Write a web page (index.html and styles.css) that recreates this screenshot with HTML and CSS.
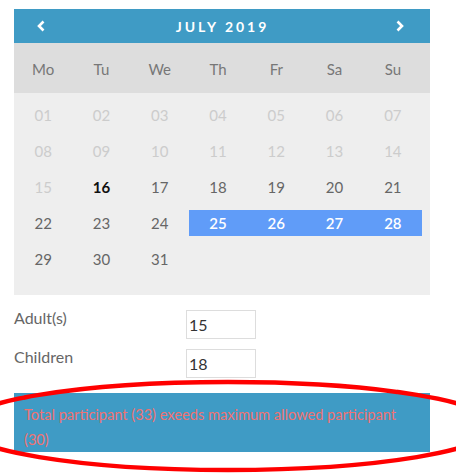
FILE: index.html
```html
<!DOCTYPE html>
<html lang="en">
<head>
  <meta charset="UTF-8">
  <title>Booking</title>
  <link rel="stylesheet" href="styles.css">
</head>
<body>
  <!-- Date picker -->
  <div class="calendar">
    <div class="cal-head">
      <svg class="nav" width="8" height="12" viewBox="0 0 8 12"><polyline points="6.5,1.5 2,6 6.5,10.5"/></svg>
      <span class="month">JULY 2019</span>
      <svg class="nav" width="8" height="12" viewBox="0 0 8 12"><polyline points="1.5,1.5 6,6 1.5,10.5"/></svg>
    </div>
    <div class="weekdays">
      <span>Mo</span><span>Tu</span><span>We</span><span>Th</span><span>Fr</span><span>Sa</span><span>Su</span>
    </div>
    <div class="days">
      <span class="off">01</span><span class="off">02</span><span class="off">03</span><span class="off">04</span><span class="off">05</span><span class="off">06</span><span class="off">07</span>
      <span class="off">08</span><span class="off">09</span><span class="off">10</span><span class="off">11</span><span class="off">12</span><span class="off">13</span><span class="off">14</span>
      <span class="off">15</span><span class="today">16</span><span>17</span><span>18</span><span>19</span><span>20</span><span>21</span>
      <span>22</span><span>23</span><span>24</span><span class="sel">25</span><span class="sel">26</span><span class="sel">27</span><span class="sel">28</span>
      <span>29</span><span>30</span><span>31</span>
    </div>
  </div>

  <!-- Participants -->
  <div class="fields">
    <div class="field">
      <label>Adult(s)</label>
      <input type="text" value="15">
    </div>
    <div class="field">
      <label>Children</label>
      <input type="text" value="18">
    </div>
  </div>

  <div class="error">Total participant (33) exeeds maximum allowed participant (30)</div>

  <!-- hand drawn highlight -->
  <svg class="circle" width="456" height="95" viewBox="0 0 456 95"><ellipse cx="228" cy="47" rx="267" ry="44"/></svg>
</body>
</html>
```

FILE: styles.css
```css
/* Page */
body {
  margin: 0;
  padding: 9px 26px 0 14px;
  background: #fff;
  font-family: "Lato", "Open Sans", sans-serif;
  color: #666;
  position: relative;
  height: 464px;
  overflow: hidden;
}

/* Calendar */
.calendar {
  width: 416px;
}

.cal-head {
  height: 34px;
  background: #3f9bc5;
  display: flex;
  align-items: center;
  justify-content: space-between;
  padding: 0 26px 0 23px;
}

.nav polyline {
  fill: none;
  stroke: #fff;
  stroke-width: 2.6;
}

.month {
  color: #fff;
  font-size: 14px;
  font-weight: 700;
  letter-spacing: 3px;
  margin-left: 4px;
}

.weekdays, .days {
  display: grid;
  grid-template-columns: repeat(7, 1fr);
  padding-right: 8px;
  text-align: center;
}

.weekdays {
  height: 50px;
  background: #ddd;
  align-items: center;
  font-size: 15px;
  color: #777;
  padding-top: 1px;
  box-sizing: border-box;
}

.days {
  background: #eee;
  grid-auto-rows: 26px;
  row-gap: 10px;
  padding-top: 9px;
  padding-bottom: 23px;
  font-size: 15px;
  color: #666;
}

.days span {
  line-height: 26px;
}

.days .off {
  color: #ccc;
}

.days .today {
  color: #111;
  font-weight: 700;
}

.days .sel {
  background: #609cf8;
  color: #fff;
  font-weight: 600;
}

/* Form */
.fields {
  display: flex;
  flex-direction: column;
  gap: 5px;
  margin-top: 10px;
}

.field {
  display: flex;
  align-items: flex-start;
  height: 34px;
}

.field label {
  width: 172px;
  line-height: 26px;
  font-size: 16px;
  color: #666;
}

.field input {
  margin: 5px 0 0;
  width: 70px;
  height: 29px;
  box-sizing: border-box;
  border: 1px solid #ddd;
  padding: 0 2px;
  font-family: inherit;
  font-size: 16px;
  color: #333;
  outline: none;
}

.error {
  margin-top: 15px;
  background: #3f9bc5;
  color: #f07272;
  font-size: 14.6px;
  line-height: 25px;
  padding: 9px 10px 0;
  height: 59px;
  box-sizing: border-box;
}

.circle {
  position: absolute;
  left: 0;
  top: 379px;
  overflow: visible;
}

.circle ellipse {
  fill: none;
  stroke: #f00;
  stroke-width: 4.5;
}
```
